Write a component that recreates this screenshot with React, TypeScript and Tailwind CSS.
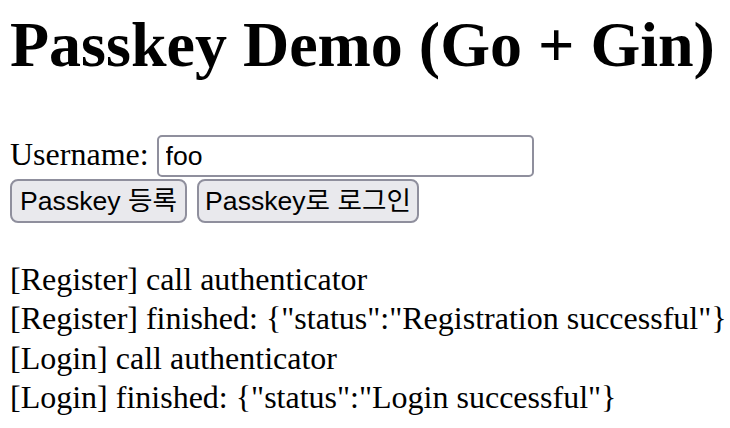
import { useState } from 'react';

const serif = 'font-["Liberation_Serif","Times_New_Roman",serif]';

const logLines = [
  '[Register] call authenticator',
  '[Register] finished: {"status":"Registration successful"}',
  '[Login] call authenticator',
  '[Login] finished: {"status":"Login successful"}',
];

export default function App() {
  const [username, setUsername] = useState('foo');

  return (
    <div className={`min-h-screen bg-white pl-[10px] pt-[9px] text-black ${serif}`}>
      <h1 className="m-0 text-[64px] font-bold leading-[72px] whitespace-nowrap">Passkey Demo (Go + Gin)</h1>

      {/* username field */}
      <div className="mt-[54px] flex items-start">
        <label htmlFor="username" className="text-[32px] leading-[38px]">
          Username:
        </label>
        <input
          id="username"
          value={username}
          onChange={(e) => setUsername(e.target.value)}
          className='ml-[8px] h-[42px] w-[377px] rounded-[5px] border-2 border-[#8f8f9d] bg-white px-[7px] font-["Liberation_Sans",Arial,sans-serif] text-[26.6px] text-black outline-none'
        />
      </div>

      {/* actions */}
      <div className='mt-[2px] flex gap-[10px] font-["Liberation_Sans","Noto_Sans_CJK_KR",Arial,sans-serif] text-[26.6px]'>
        <button className="h-[44px] w-[177px] rounded-[8px] border-2 border-[#8f8f9d] bg-[#e9e9ed] leading-none text-black">
          Passkey 등록
        </button>
        <button className="h-[44px] w-[222px] rounded-[8px] border-2 border-[#8f8f9d] bg-[#e9e9ed] leading-none text-black">
          Passkey로 로그인
        </button>
      </div>

      {/* log output */}
      <div className="mt-[37px] text-[32px] leading-[39.3px] whitespace-nowrap">
        {logLines.map((line) => (
          <div key={line}>{line}</div>
        ))}
      </div>
    </div>
  );
}
